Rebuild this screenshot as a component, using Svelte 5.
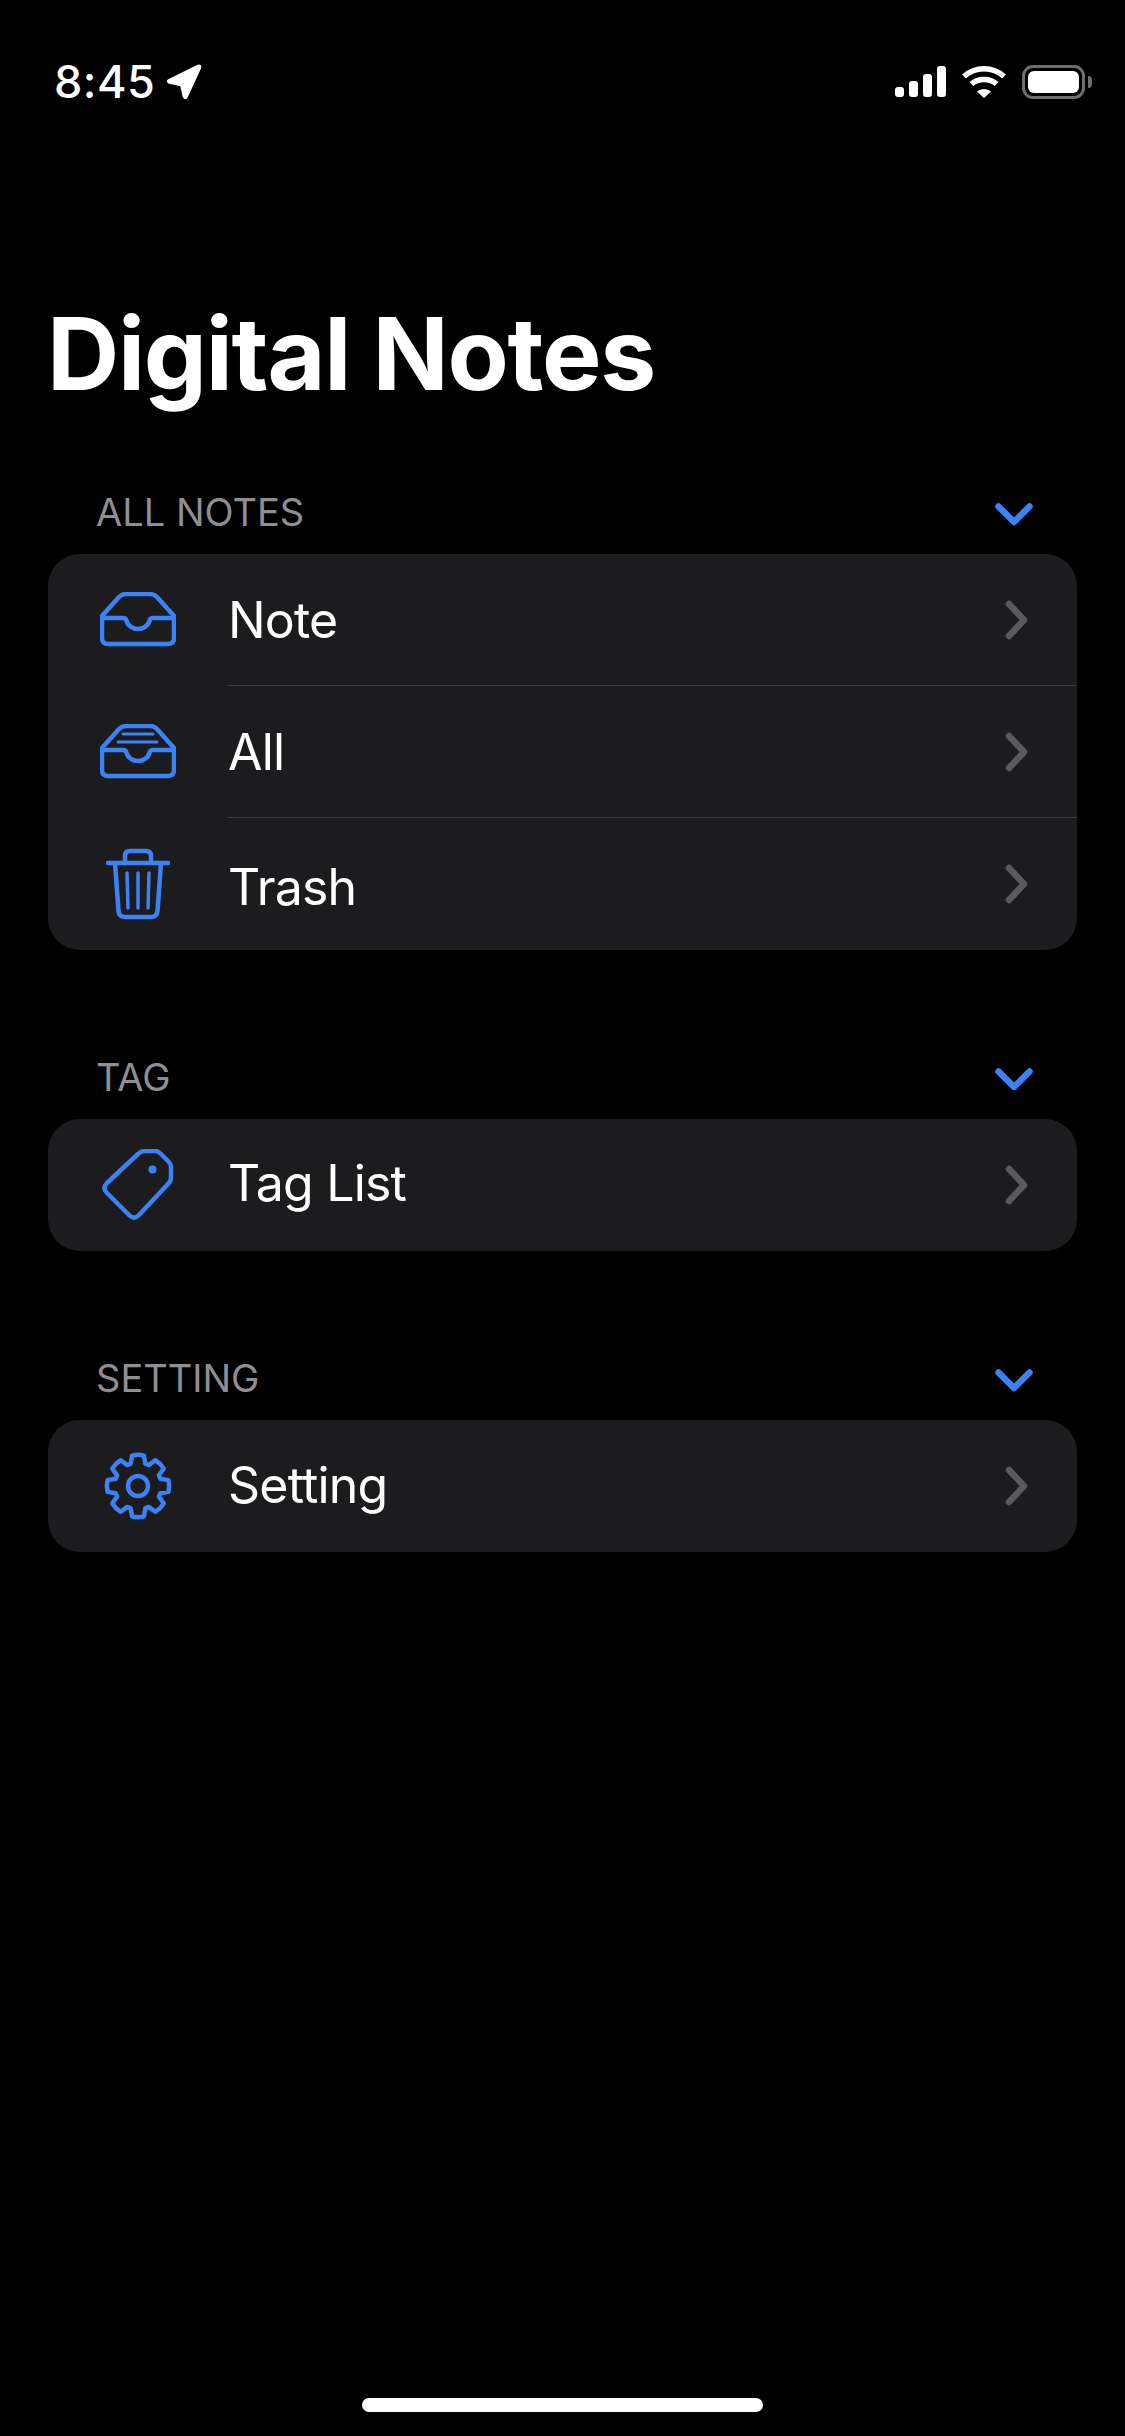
<script>
  // gear outline: 8 teeth, top tooth at 12 o'clock
  function gearPath(cx, cy) {
    const pt = (r, deg) => {
      const a = ((deg - 90) * Math.PI) / 180;
      return `${(cx + r * Math.cos(a)).toFixed(1)} ${(cy + r * Math.sin(a)).toFixed(1)}`;
    };
    let d = '';
    for (let i = 0; i < 8; i++) {
      const a = i * 45;
      d += `${i ? 'L' : 'M'}${pt(23.5, a - 18)} L${pt(31, a - 11)} Q${pt(32, a)} ${pt(31, a + 11)} L${pt(23.5, a + 18)} `;
    }
    return d + 'Z';
  }

  // shift: the labels don't all sit dead centre in their rows
  const sections = [
    {
      title: 'ALL NOTES',
      rows: [
        { label: 'Note', icon: 'inbox', shift: 0 },
        { label: 'All', icon: 'tray', shift: 0 },
        { label: 'Trash', icon: 'trash', shift: 5 },
      ],
    },
    { title: 'TAG', rows: [{ label: 'Tag List', icon: 'tag', shift: -5 }] },
    { title: 'SETTING', rows: [{ label: 'Setting', icon: 'gear', shift: -2 }] },
  ];
</script>

<div class="page">
  <!-- STATUS BAR -->
  <div class="status">
    <div class="status-left">
      <span class="time">8:45</span>
      <svg width="36" height="36" viewBox="0 0 35 35" fill="#fff" stroke="#fff" stroke-width="1.500" stroke-linejoin="round">
        <path d="M2.500 15.500 L31 1.500 Q34 0.500 33.500 3.500 L20.500 32 Q19 35 17 32 L14.500 21 L3 18.500 Q0.500 17 2.500 15.500 Z" />
      </svg>
    </div>
    <div class="status-right">
      <svg width="51" height="32" viewBox="0 0 51 32" fill="#fff">
        <rect x="0" y="21" width="9" height="10" rx="3" />
        <rect x="14" y="15" width="9" height="16" rx="3" />
        <rect x="28" y="8" width="9" height="23" rx="3" />
        <rect x="42" y="0" width="9" height="31" rx="3" />
      </svg>
      <svg width="46" height="34" viewBox="0 0 46 34" fill="none" stroke="#fff" stroke-width="5.500">
        <path d="M3 11.500 C14 1 32 1 43 11.500" />
        <path d="M10.500 19 C17 13 29 13 35.500 19" />
        <path d="M23 33 L16 26.500 C20 23 26 23 30 26.500 Z" fill="#fff" stroke="none" />
      </svg>
      <div class="battery">
        <div class="battery-body"><div class="battery-fill"></div></div>
        <div class="battery-cap"></div>
      </div>
    </div>
  </div>

  <h1 class="title">Digital Notes</h1>

  {#each sections as section}
    <section class="section">
      <div class="section-head">
        <span class="section-title">{section.title}</span>
        <svg class="collapse" width="38" height="23" viewBox="0 0 38 23" fill="none" stroke="#3b82f6" stroke-width="6.500" stroke-linecap="round" stroke-linejoin="round">
          <path d="M3.500 3.500 L19 19 L34.500 3.500" />
        </svg>
      </div>
      <div class="card">
        {#each section.rows as row}
          <div class="row">
            <div class="row-icon">
              {#if row.icon === 'inbox' || row.icon === 'tray'}
                <svg width="76" height="56" viewBox="0 0 76 56" fill="none" stroke="#3b82f6" stroke-width="4.500" stroke-linecap="round" stroke-linejoin="round">
                  <path d="M2 24 L19 5 Q22 2 26 2 H50 Q54 2 57 5 L74 24 V46 Q74 52 68 52 H8 Q2 52 2 46 Z" />
                  <path d="M2 26 H23 Q26 26 26.500 29 C28 34 33 37 38 37 C43 37 48 34 49.500 29 Q50 26 53 26 H74" />
                  {#if row.icon === 'tray'}
                    <path d="M23 10 H53 M18 18 H57" stroke-width="3" />
                  {/if}
                </svg>
              {:else if row.icon === 'trash'}
                <svg width="64" height="72" viewBox="0 0 64 72" fill="none" stroke="#3b82f6" stroke-width="4.500" stroke-linecap="round" stroke-linejoin="round">
                  <path d="M2 15 H62" />
                  <path d="M19 15 V8 Q19 3 24 3 H40 Q45 3 45 8 V15" />
                  <path d="M9 15 L12.500 63 Q13 69 19 69 H45 Q51 69 51.500 63 L55 15" />
                  <path d="M21 25 L22 60 M32 25 V60 M43 25 L42 60" stroke-width="3.500" />
                </svg>
              {:else if row.icon === 'tag'}
                <svg width="72" height="72" viewBox="0 0 72 72" fill="none" stroke="#3b82f6" stroke-width="4.500" stroke-linecap="round" stroke-linejoin="round">
                  <path d="M36 5 Q39 2 43 2 H53 Q56 2 58 4 L66 12 Q69 15 69 18 V29 Q69 32 66 35 L37 66 Q32 71 27 66 L5 44 Q0 39 5 34 Z" />
                  <circle cx="50.500" cy="20.500" r="4" fill="#3b82f6" stroke="none" />
                </svg>
              {:else}
                <svg width="70" height="70" viewBox="0 0 70 70" fill="none" stroke="#3b82f6" stroke-width="4.500" stroke-linejoin="round">
                  <path d={gearPath(35, 35)} />
                  <circle cx="35" cy="35" r="10" />
                </svg>
              {/if}
            </div>
            <div class="row-body">
              <span class="row-label" style="margin-top: {row.shift}px">{row.label}</span>
              <svg class="disclosure" width="24" height="40" viewBox="0 0 24 40" fill="none" stroke="#5a5a5e" stroke-width="6.500" stroke-linecap="round" stroke-linejoin="round">
                <path d="M4 4 L19 20 L4 36" />
              </svg>
            </div>
          </div>
        {/each}
      </div>
    </section>
  {/each}

  <div class="home-indicator"></div>
</div>

<style>
:global(body) { margin: 0; background: #000; }

.page {
  height: 2436px;
  display: flex;
  flex-direction: column;
  background: #000;
  color: #fff;
  font-family: Inter, "Liberation Sans", sans-serif;
  box-sizing: border-box;
}

.status {
  display: flex;
  justify-content: space-between;
  align-items: center;
  height: 50px;
  margin-top: 57px;
  padding: 0 33px 0 54px;
}
.status-left { display: flex; align-items: center; gap: 11px; }
.time { font-size: 45px; font-weight: 500; letter-spacing: 0.5px; line-height: 50px; }
.status-right { display: flex; align-items: center; gap: 15px; }

.battery { display: flex; align-items: center; gap: 3px; }
.battery-body {
  width: 63px;
  height: 34px;
  border: 3px solid #6e6e70;
  border-radius: 11px;
  padding: 3px;
  box-sizing: border-box;
}
.battery-fill { width: 100%; height: 100%; background: #fff; border-radius: 6px; }
.battery-cap { width: 4px; height: 12px; background: #6e6e70; border-radius: 0 4px 4px 0; }

.title {
  margin: 183px 0 52px 0;
  padding-left: 47px;
  height: 128px;
  font-size: 100px;
  line-height: 128px;
  font-weight: 700;
  letter-spacing: -1.25px;
}

.section { margin: 0 48px 85px; }
.section-head {
  height: 84px;
  display: flex;
  justify-content: space-between;
  align-items: center;
  padding: 0 44px 0 48px;
}
.section-title { font-size: 38px; color: #8e8e93; font-weight: 400; }
.collapse { margin-top: 5px; }

.card { background: #1c1c1e; border-radius: 32px; overflow: hidden; }
.row { display: flex; height: 132px; }
.row-icon {
  width: 180px;
  flex-shrink: 0;
  display: flex;
  align-items: center;
  justify-content: center;
}
.row-body {
  flex: 1;
  display: flex;
  align-items: center;
  justify-content: space-between;
  padding-right: 48px;
  border-bottom: 1px solid #3a3a3c;
}
.row:last-child .row-body { border-bottom: 0; }
.row-label { font-size: 50px; font-weight: 400; letter-spacing: -0.8px; }

.home-indicator {
  width: 401px;
  height: 14px;
  border-radius: 7px;
  background: #fff;
  margin: auto auto 24px;
}
</style>
